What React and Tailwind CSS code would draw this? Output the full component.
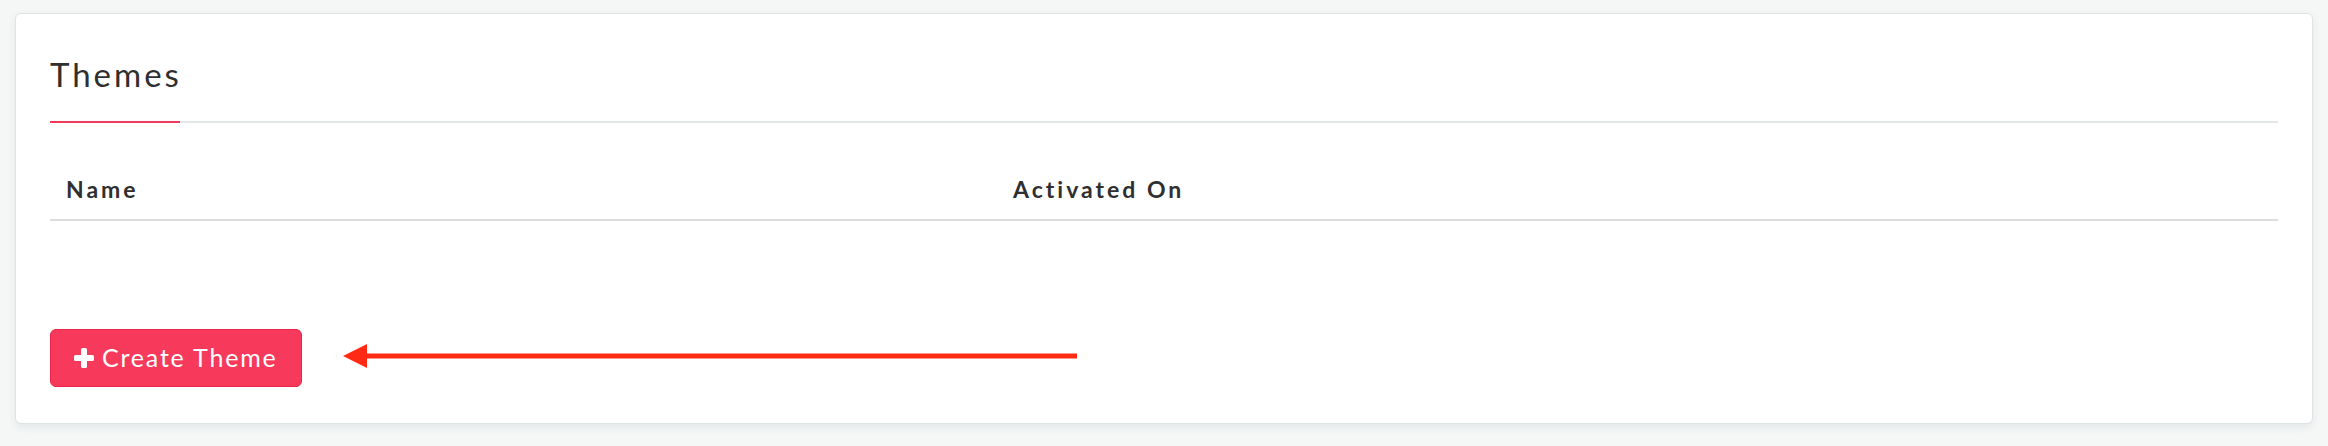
export default function App() {
  return (
    <div className="min-h-[446px] w-full bg-[#f5f7f7] px-[15px] pt-[13px] pb-[22px]" style={{ fontFamily: "Lato, 'Open Sans', sans-serif" }}>
      <div className="h-[411px] rounded-[6px] border border-[#dde4e6] bg-white px-[34px] pt-[40px] shadow-[0_3px_8px_rgba(0,40,50,0.08)]">
        <h2 className="text-[33px] leading-[40px] font-normal tracking-[3px] text-[#2f2f2f]">Themes</h2>
        <div className="mt-[27px] flex h-[2px] w-full bg-[#e4e7e8]">
          <div className="h-[2px] w-[130px] bg-[#f33a5a]" />
        </div>

        <table className="mt-[52px] w-full border-collapse">
          <thead>
            <tr className="border-b-2 border-[#dcdcdc]">
              <th className="w-[947px] pl-4 pb-[16px] text-left text-[23px] leading-[28px] font-bold tracking-[3px] text-[#2f2f2f]">Name</th>
              <th className="pl-4 pb-[16px] text-left text-[23px] leading-[28px] font-bold tracking-[3px] text-[#2f2f2f]">Activated On</th>
            </tr>
          </thead>
          <tbody />
        </table>

        <div className="mt-[108px] flex items-center">
          <button className="flex h-[58px] w-[252px] items-center gap-[8px] rounded-[6px] border border-[#ec2447] bg-[#f73a5b] pl-[23px] text-[25px] tracking-[1.8px] text-white">
            <svg width="20" height="20" viewBox="0 0 20 20">
              <rect x="7" y="0" width="6" height="20" rx="1.5" fill="white" />
              <rect x="0" y="7" width="20" height="6" rx="1.5" fill="white" />
            </svg>
            <span>Create Theme</span>
          </button>
          <svg className="ml-[41px] mb-[5px]" width="734" height="26" viewBox="0 0 734 26">
            <line x1="22" y1="13" x2="734" y2="13" stroke="#ff2a14" strokeWidth="5" />
            <polygon points="0,13 24,1 24,25" fill="#ff2a14" />
          </svg>
        </div>
      </div>
    </div>
  );
}
